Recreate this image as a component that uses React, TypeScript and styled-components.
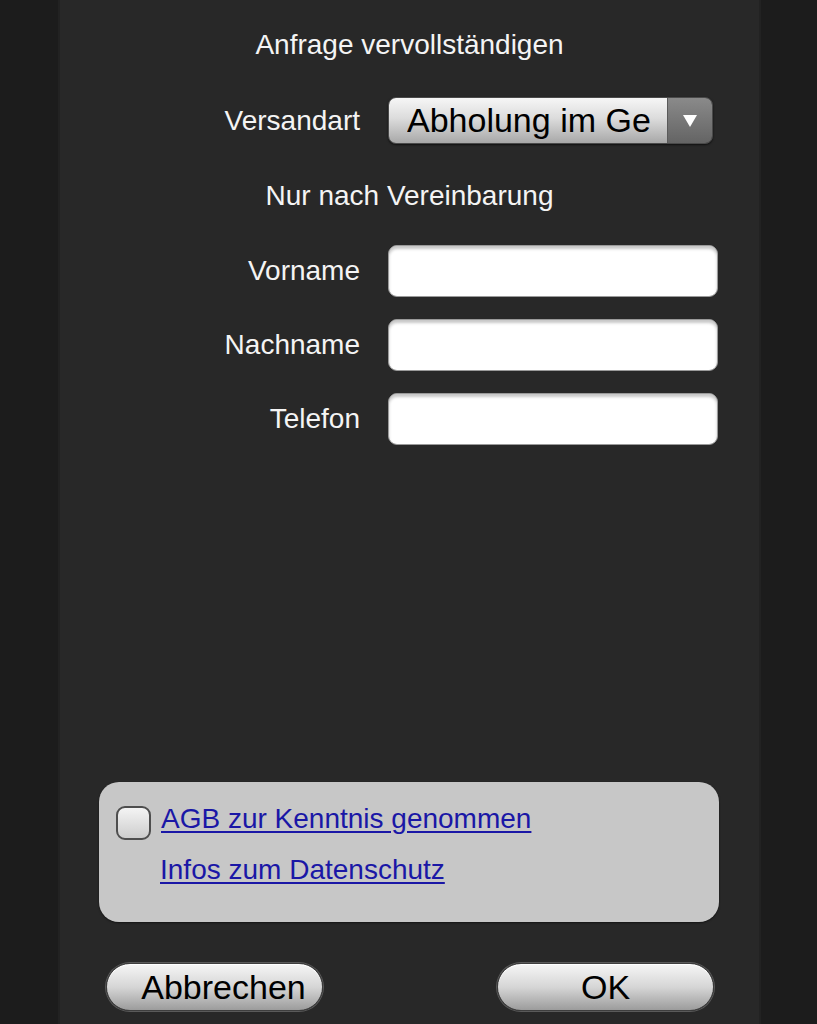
import React from 'react';
import styled, { createGlobalStyle } from 'styled-components';

const GlobalStyle = createGlobalStyle`
  html, body {
    margin: 0;
    padding: 0;
    background: #1c1c1c;
  }

  body {
    font-family: "Liberation Sans", Arial, sans-serif;
  }
`;

const App: React.FC = () => {
  return (
    <>
      <GlobalStyle />
      <Page>
        <Panel>
          <Title>Anfrage vervollständigen</Title>

          <FieldRow $top={36}>
            <FieldLabel>Versandart</FieldLabel>
            <Select>
              <SelectValue>
                <SelectText>Abholung im Geschäft</SelectText>
              </SelectValue>
              <SelectArrow>
                <svg width="16" height="14" viewBox="0 0 16 14">
                  <path d="M1 1 L15 1 L8 13 Z" fill="#ffffff" />
                </svg>
              </SelectArrow>
            </Select>
          </FieldRow>

          <Note>Nur nach Vereinbarung</Note>

          <FieldRow $top={33}>
            <FieldLabel>Vorname</FieldLabel>
            <TextInput />
          </FieldRow>
          <FieldRow $top={22}>
            <FieldLabel>Nachname</FieldLabel>
            <TextInput />
          </FieldRow>
          <FieldRow $top={22}>
            <FieldLabel>Telefon</FieldLabel>
            <TextInput />
          </FieldRow>

          <ConsentBox>
            <ConsentRow>
              <Checkbox />
              <ConsentLink href="#">AGB zur Kenntnis genommen</ConsentLink>
            </ConsentRow>
            <ConsentRow $indent>
              <ConsentLink href="#">Infos zum Datenschutz</ConsentLink>
            </ConsentRow>
          </ConsentBox>

          <ButtonBar>
            <PillButton $offset={18}>Abbrechen</PillButton>
            <PillButton>OK</PillButton>
          </ButtonBar>
        </Panel>
      </Page>
    </>
  );
};

const Page = styled.div`
  width: 817px;
  height: 1024px;
  overflow: hidden;
  background: #1c1c1c;
`;

const Panel = styled.div`
  box-sizing: border-box;
  width: 699px;
  height: 1024px;
  margin-left: 60px;
  padding-bottom: 13px;
  display: flex;
  flex-direction: column;
  background: #282828;
  box-shadow: -2px 0 0 #222222, 2px 0 0 #222222;
`;

const Title = styled.h1`
  margin: 29px 0 0;
  font-weight: 400;
  font-size: 28px;
  line-height: 32px;
  text-align: center;
  color: #f4f4f4;
`;

const Note = styled.p`
  margin: 36px 0 0;
  font-size: 28px;
  line-height: 32px;
  text-align: center;
  color: #f4f4f4;
`;

const FieldRow = styled.div<{ $top: number }>`
  display: grid;
  grid-template-columns: 300px auto;
  column-gap: 28px;
  align-items: center;
  margin-top: ${({ $top }) => $top}px;
`;

const FieldLabel = styled.label`
  font-size: 28px;
  line-height: 32px;
  text-align: right;
  color: #f4f4f4;
`;

const Select = styled.div`
  box-sizing: border-box;
  width: 325px;
  height: 47px;
  display: flex;
  overflow: hidden;
  border: 1px solid #4a4a4a;
  border-radius: 8px;
  box-shadow: 0 1px 2px rgba(0, 0, 0, 0.6);
`;

const SelectValue = styled.div`
  flex: 1;
  min-width: 0;
  padding: 0 16px 0 18px;
  background: linear-gradient(#f6f6f6 0%, #dcdcdc 45%, #a8a8a8 100%);
`;

const SelectText = styled.div`
  overflow: hidden;
  white-space: nowrap;
  font-size: 34px;
  line-height: 45px;
  color: #000000;
`;

const SelectArrow = styled.div`
  width: 44px;
  display: flex;
  align-items: center;
  justify-content: center;
  border-left: 1px solid #5a5a5a;
  background: linear-gradient(#8a8a8a, #646464);
`;

const TextInput = styled.input`
  box-sizing: border-box;
  width: 330px;
  height: 52px;
  padding: 0 12px;
  font-family: "Liberation Sans", Arial, sans-serif;
  font-size: 28px;
  border: 1px solid #9a9a9a;
  border-radius: 9px;
  background: #ffffff;
  box-shadow: inset 0 3px 3px rgba(0, 0, 0, 0.22);
  outline: none;
`;

const ConsentBox = styled.div`
  box-sizing: border-box;
  width: 620px;
  height: 140px;
  margin: auto 0 0 39px;
  padding: 20px 17px 0;
  display: flex;
  flex-direction: column;
  gap: 9px;
  background: #c7c7c7;
  border-radius: 20px;
  box-shadow: 0 1px 2px rgba(0, 0, 0, 0.5);
`;

const ConsentRow = styled.div<{ $indent?: boolean }>`
  display: flex;
  align-items: center;
  gap: 10px;
  padding-left: ${({ $indent }) => ($indent ? '44px' : '0')};
`;

const Checkbox = styled.span`
  box-sizing: border-box;
  width: 35px;
  height: 34px;
  flex-shrink: 0;
  border: 2px solid #4e4e4e;
  border-radius: 9px;
  background: linear-gradient(#f4f4f4, #cdcdcd);
`;

const ConsentLink = styled.a`
  padding-bottom: 8px;
  font-size: 28px;
  line-height: 34px;
  color: #1a17a6;
  text-decoration: underline;
  text-underline-offset: 3px;
`;

const ButtonBar = styled.div`
  margin-top: 41px;
  padding: 0 45px 0 46px;
  display: flex;
  justify-content: space-between;
`;

const PillButton = styled.button<{ $offset?: number }>`
  box-sizing: border-box;
  width: 217px;
  height: 48px;
  padding: 0 0 0 ${({ $offset }) => $offset ?? 0}px;
  font-family: "Liberation Sans", Arial, sans-serif;
  font-size: 34px;
  line-height: 44px;
  color: #000000;
  white-space: nowrap;
  border: 1px solid #3e3e3e;
  border-radius: 24px;
  background: linear-gradient(#f6f6f6 0%, #d6d6d6 50%, #9c9c9c 100%);
  box-shadow: 0 0 0 1px #5a5a5a, inset 0 1px 0 #ffffff;
`;

export default App;
